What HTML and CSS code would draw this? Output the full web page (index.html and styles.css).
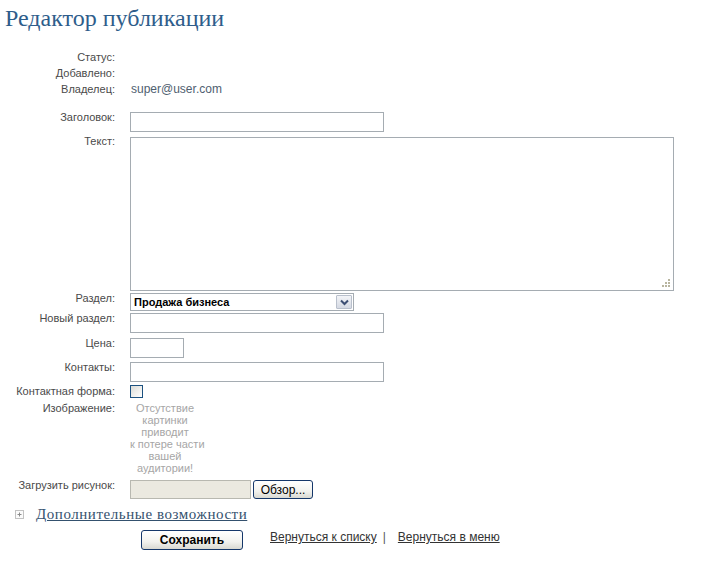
FILE: index.html
```html
<!DOCTYPE html>
<html lang="ru">
<head>
<meta charset="utf-8">
<title>Редактор публикации</title>
<link rel="stylesheet" href="styles.css">
</head>
<body>
<div class="page">
  <h1 class="title">Редактор публикации</h1>

  <div class="info">
    <div class="row info-row"><span class="label">Статус:</span><span class="value"></span></div>
    <div class="row info-row"><span class="label">Добавлено:</span><span class="value"></span></div>
    <div class="row info-row"><span class="label">Владелец:</span><span class="value owner">super@user.com</span></div>
  </div>

  <div class="form">
    <div class="row field-row">
      <span class="label">Заголовок:</span>
      <input class="input wide" type="text">
    </div>
    <div class="row field-row text-row">
      <span class="label">Текст:</span>
      <div class="textarea-wrap">
        <textarea class="textarea"></textarea>
        <svg class="grip" width="10" height="10" viewBox="0 0 10 10">
          <rect x="7" y="1" width="2" height="2" fill="#b8b59f"/>
          <rect x="4" y="4" width="2" height="2" fill="#b8b59f"/>
          <rect x="7" y="4" width="2" height="2" fill="#b8b59f"/>
          <rect x="1" y="7" width="2" height="2" fill="#b8b59f"/>
          <rect x="4" y="7" width="2" height="2" fill="#b8b59f"/>
          <rect x="7" y="7" width="2" height="2" fill="#b8b59f"/>
        </svg>
      </div>
    </div>
    <div class="row field-row select-row">
      <span class="label">Раздел:</span>
      <div class="select">
        <span class="select-text">Продажа бизнеса</span>
        <span class="select-btn">
          <svg width="9" height="7" viewBox="0 0 9 7"><path d="M1 1.5 L4.5 5 L8 1.5" fill="none" stroke="#3d4f73" stroke-width="2"/></svg>
        </span>
      </div>
    </div>
    <div class="row field-row gap3">
      <span class="label">Новый раздел:</span>
      <input class="input wide" type="text">
    </div>
    <div class="row field-row">
      <span class="label">Цена:</span>
      <input class="input price" type="text">
    </div>
    <div class="row field-row">
      <span class="label">Контакты:</span>
      <input class="input wide" type="text">
    </div>
    <div class="row field-row check-row">
      <span class="label">Контактная форма:</span>
      <span class="checkbox"></span>
    </div>
    <div class="row field-row image-row">
      <span class="label">Изображение:</span>
      <div class="noimage">Отсутствие<br>картинки<br>приводит<br>к потере части<br>вашей<br>аудитории!</div>
    </div>
    <div class="row field-row upload-row">
      <span class="label">Загрузить рисунок:</span>
      <div class="file">
        <span class="file-field"></span>
        <span class="btn browse">Обзор...</span>
      </div>
    </div>
  </div>

  <div class="more">
    <span class="plus">
      <svg width="9" height="9" viewBox="0 0 9 9"><rect x="0.5" y="0.5" width="8" height="8" fill="#fbfbfb" stroke="#c2c2c2"/><path d="M2.5 4.5 H6.5 M4.5 2.5 V6.5" stroke="#8a8a8a" stroke-width="1"/></svg>
    </span>
    <a class="more-link" href="#">Дополнительные возможности</a>
  </div>

  <div class="actions">
    <span class="btn save">Сохранить</span>
    <div class="links">
      <a class="link" href="#">Вернуться к списку</a>
      <span class="sep">|</span>
      <a class="link" href="#">Вернуться в меню</a>
    </div>
  </div>
</div>
</body>
</html>
```

FILE: styles.css
```css
html, body {
  margin: 0;
  padding: 0;
  background: #ffffff;
}

body {
  font-family: "Liberation Sans", Arial, sans-serif;
  font-size: 11px;
  color: #4a4a4a;
}

.page {
  padding: 4px 0 0 8px;
}

.title {
  margin: 0 0 0 -3px;
  font-family: "Liberation Serif", "Times New Roman", serif;
  font-weight: normal;
  font-size: 24px;
  line-height: 28px;
  color: #2e5d8b;
}

.info {
  margin-top: 17px;
}

.row {
  display: flex;
  align-items: flex-start;
}

.label {
  flex: 0 0 107px;
  width: 107px;
  margin-right: 15px;
  text-align: right;
  line-height: 14px;
}

.info-row {
  height: 16px;
}

.info-row .label {
  line-height: 16px;
}

.value {
  line-height: 16px;
}

.owner {
  font-size: 12px;
  color: #4f6070;
  margin-left: 1px;
}

.form {
  margin-top: 13px;
}

.field-row {
  margin-bottom: 2px;
}

.text-row {
  margin-bottom: 0;
}

.input {
  box-sizing: border-box;
  height: 20px;
  margin: 2px 0 0 0;
  padding: 0 3px;
  border: 1px solid #a5acb2;
  background: #fff;
  font: inherit;
}

.wide {
  width: 254px;
}

.price {
  width: 54px;
}

.textarea-wrap {
  position: relative;
  width: 544px;
  height: 154px;
  margin-top: 3px;
}

.textarea {
  box-sizing: border-box;
  display: block;
  width: 544px;
  height: 154px;
  margin: 0;
  padding: 2px;
  border: 1px solid #a5acb2;
  resize: none;
  font: inherit;
}

.grip {
  position: absolute;
  right: 3px;
  bottom: 3px;
}

.select-row {
  margin-bottom: 0;
}

.select {
  box-sizing: border-box;
  display: flex;
  align-items: center;
  justify-content: space-between;
  width: 224px;
  height: 18px;
  margin-top: 2px;
  padding: 0 1px 0 3px;
  border: 1px solid #a5acb2;
  background: #fff;
}

.select-text {
  font-weight: bold;
  font-size: 11px;
  color: #000;
}

.select-btn {
  box-sizing: border-box;
  display: flex;
  align-items: center;
  justify-content: center;
  width: 16px;
  height: 14px;
  border: 1px solid #b9c0cc;
  border-radius: 1px;
  background: linear-gradient(#f3f4f7, #d5d9e3);
}

.gap3 {
  margin-bottom: 3px;
}

.check-row {
  margin-bottom: 3px;
}

.checkbox {
  box-sizing: border-box;
  display: block;
  width: 13px;
  height: 13px;
  margin-top: 1px;
  border: 1px solid #1c5180;
  background: linear-gradient(135deg, #dcdcd7, #ffffff);
}

.image-row {
  margin-bottom: 4px;
}

.noimage {
  width: 70px;
  margin-top: 1px;
  text-align: center;
  white-space: nowrap;
  font-size: 11px;
  line-height: 12px;
  color: #a6a6a6;
}

.file {
  display: flex;
  align-items: center;
  gap: 2px;
  margin-top: 2px;
}

.file-field {
  box-sizing: border-box;
  display: block;
  width: 121px;
  height: 19px;
  border: 1px solid #b8b8b0;
  background: #ebe9e0;
}

.btn {
  box-sizing: border-box;
  display: flex;
  align-items: center;
  justify-content: center;
  border: 1px solid #15376a;
  border-radius: 3px;
  background: linear-gradient(#ffffff, #f2f2ee 60%, #d9d9d2);
  color: #000;
  font-size: 12px;
}

.browse {
  width: 60px;
  height: 19px;
}

.more {
  display: flex;
  align-items: center;
  margin-top: 7px;
  margin-left: 7px;
  height: 16px;
}

.plus {
  display: flex;
  width: 9px;
  height: 9px;
  margin-right: 12px;
}

.more-link {
  font-family: "Liberation Serif", "Times New Roman", serif;
  font-size: 15px;
  letter-spacing: 0.55px;
  color: #34516e;
  text-decoration: underline;
}

.actions {
  display: flex;
  align-items: center;
  margin-top: 8px;
  margin-left: 133px;
}

.save {
  width: 102px;
  height: 20px;
  font-weight: bold;
  font-size: 12px;
}

.links {
  display: flex;
  align-items: center;
  margin-left: 27px;
  margin-top: -6px;
  font-size: 12px;
}

.link {
  color: #333;
  text-decoration: underline;
}

.sep {
  margin: 0 12px 0 6px;
  color: #555;
}
```
